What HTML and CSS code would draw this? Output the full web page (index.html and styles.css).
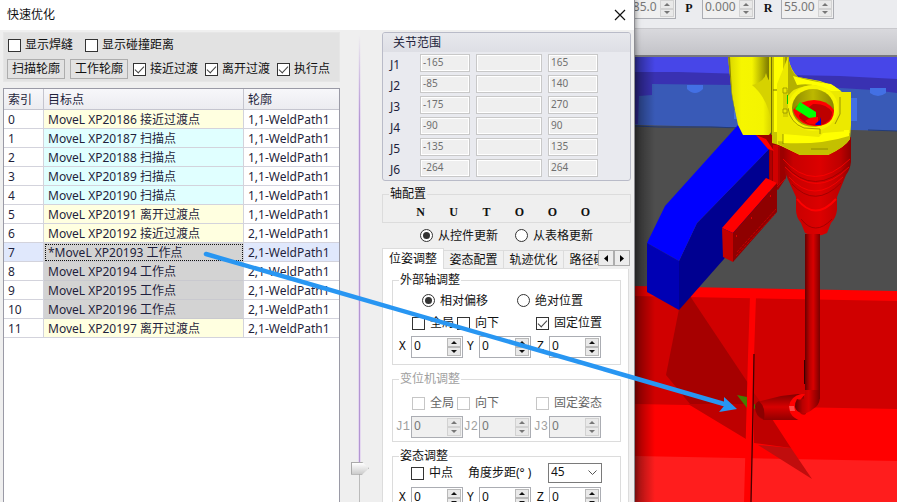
FILE: index.html
```html
<!DOCTYPE html>
<html lang="zh-CN">
<head>
<meta charset="utf-8">
<title>快速优化</title>
<link rel="stylesheet" href="styles.css">
</head>
<body>
<main class="dialog">
  <header class="titlebar">
    <h1>快速优化</h1>
    <button class="close" type="button" aria-label="关闭"><svg width="12" height="12" viewBox="0 0 12 12"><path d="M1 1l10 10M11 1L1 11" stroke="#111" stroke-width="1.2" fill="none"/></svg></button>
  </header>
  <div class="content">
    <section class="left">
      <div class="filters">
        <div class="filter-row">
          <label class="opt"><input type="checkbox">显示焊缝</label>
          <label class="opt wide"><input type="checkbox">显示碰撞距离</label>
        </div>
        <div class="filter-row second">
          <button type="button" class="btn">扫描轮廓</button>
          <button type="button" class="btn">工作轮廓</button>
          <label class="opt"><input type="checkbox" checked>接近过渡</label>
          <label class="opt"><input type="checkbox" checked>离开过渡</label>
          <label class="opt"><input type="checkbox" checked>执行点</label>
        </div>
      </div>
      <div class="grid-frame">
        <table class="points">
          <colgroup><col class="c-index"><col class="c-target"><col></colgroup>
          <thead><tr><th>索引</th><th>目标点</th><th>轮廓</th></tr></thead>
          <tbody>
            <tr><td>0</td><td class="pass">MoveL XP20186 接近过渡点</td><td>1,1-WeldPath1</td></tr>
            <tr><td>1</td><td class="scan">MoveL XP20187 扫描点</td><td>1,1-WeldPath1</td></tr>
            <tr><td>2</td><td class="scan">MoveL XP20188 扫描点</td><td>1,1-WeldPath1</td></tr>
            <tr><td>3</td><td class="scan">MoveL XP20189 扫描点</td><td>1,1-WeldPath1</td></tr>
            <tr><td>4</td><td class="scan">MoveL XP20190 扫描点</td><td>1,1-WeldPath1</td></tr>
            <tr><td>5</td><td class="pass">MoveL XP20191 离开过渡点</td><td>1,1-WeldPath1</td></tr>
            <tr><td>6</td><td class="pass">MoveL XP20192 接近过渡点</td><td>2,1-WeldPath1</td></tr>
            <tr class="current"><td>7</td><td class="work">*MoveL XP20193 工作点</td><td>2,1-WeldPath1</td></tr>
            <tr><td>8</td><td class="work">MoveL XP20194 工作点</td><td>2,1-WeldPath1</td></tr>
            <tr><td>9</td><td class="work">MoveL XP20195 工作点</td><td>2,1-WeldPath1</td></tr>
            <tr><td>10</td><td class="work">MoveL XP20196 工作点</td><td>2,1-WeldPath1</td></tr>
            <tr><td>11</td><td class="pass">MoveL XP20197 离开过渡点</td><td>2,1-WeldPath1</td></tr>
          </tbody>
        </table>
      </div>
    </section>

    <div class="slider"><input type="range" min="0" max="100" value="94" aria-label="位置"></div>

    <section class="right">
      <section class="joints">
        <h2>关节范围</h2>
        <div class="joint-rows">
          <label for="j1">J1</label><input id="j1" value="-165" disabled><input aria-label="J1" disabled><input aria-label="J1" value="165" disabled>
          <label for="j2">J2</label><input id="j2" value="-85" disabled><input aria-label="J2" disabled><input aria-label="J2" value="140" disabled>
          <label for="j3">J3</label><input id="j3" value="-175" disabled><input aria-label="J3" disabled><input aria-label="J3" value="270" disabled>
          <label for="j4">J4</label><input id="j4" value="-90" disabled><input aria-label="J4" disabled><input aria-label="J4" value="90" disabled>
          <label for="j5">J5</label><input id="j5" value="-135" disabled><input aria-label="J5" disabled><input aria-label="J5" value="135" disabled>
          <label for="j6">J6</label><input id="j6" value="-264" disabled><input aria-label="J6" disabled><input aria-label="J6" value="264" disabled>
        </div>
      </section>

      <fieldset class="axis">
        <legend>轴配置</legend>
        <div class="axis-flags"><b>N</b><b>U</b><b>T</b><b>O</b><b>O</b><b>O</b></div>
      </fieldset>

      <div class="radios source">
        <label class="opt"><input type="radio" name="source" checked>从控件更新</label>
        <label class="opt"><input type="radio" name="source">从表格更新</label>
      </div>

      <div class="tabs">
        <div class="tablist" role="tablist">
          <button type="button" role="tab" class="tab active" aria-selected="true">位姿调整</button>
          <button type="button" role="tab" class="tab">姿态配置</button>
          <button type="button" role="tab" class="tab">轨迹优化</button>
          <button type="button" role="tab" class="tab">路径碰撞</button>
        </div>
        <button type="button" class="scroll" aria-label="向左"><svg width="4" height="7" viewBox="0 0 4 7"><path d="M4 0v7L0 3.500z"/></svg></button>
        <button type="button" class="scroll" aria-label="向右"><svg width="4" height="7" viewBox="0 0 4 7"><path d="M0 0v7l4-3.500z"/></svg></button>
      </div>

      <div class="page">
        <fieldset class="group external">
          <legend>外部轴调整</legend>
          <div class="radios">
            <label class="opt"><input type="radio" name="mode" checked>相对偏移</label>
            <label class="opt"><input type="radio" name="mode">绝对位置</label>
          </div>
          <div class="checks">
            <label class="opt"><input type="checkbox">全局</label>
            <label class="opt"><input type="checkbox">向下</label>
            <label class="opt"><input type="checkbox" checked>固定位置</label>
          </div>
          <div class="spins">
            <label for="ex">X</label><span class="spin"><input id="ex" value="0"><button type="button" aria-label="增加"></button><button type="button" aria-label="减少" class="down"></button></span>
            <label for="ey">Y</label><span class="spin"><input id="ey" value="0"><button type="button" aria-label="增加"></button><button type="button" aria-label="减少" class="down"></button></span>
            <label for="ez">Z</label><span class="spin"><input id="ez" value="0"><button type="button" aria-label="增加"></button><button type="button" aria-label="减少" class="down"></button></span>
          </div>
        </fieldset>

        <fieldset class="group positioner" disabled>
          <legend>变位机调整</legend>
          <div class="checks">
            <label class="opt"><input type="checkbox">全局</label>
            <label class="opt"><input type="checkbox">向下</label>
            <label class="opt"><input type="checkbox">固定姿态</label>
          </div>
          <div class="spins">
            <label for="p1">J1</label><span class="spin"><input id="p1" value="0"><button type="button" aria-label="增加"></button><button type="button" aria-label="减少" class="down"></button></span>
            <label for="p2">J2</label><span class="spin"><input id="p2" value="0"><button type="button" aria-label="增加"></button><button type="button" aria-label="减少" class="down"></button></span>
            <label for="p3">J3</label><span class="spin"><input id="p3" value="0"><button type="button" aria-label="增加"></button><button type="button" aria-label="减少" class="down"></button></span>
          </div>
        </fieldset>

        <fieldset class="group">
          <legend>姿态调整</legend>
          <div class="step-row">
            <label class="opt"><input type="checkbox">中点</label>
            <label for="step">角度步距(° )</label>
            <select id="step"><option>45</option></select>
          </div>
          <div class="spins">
            <label for="ax">X</label><span class="spin"><input id="ax" value="0"><button type="button" aria-label="增加"></button><button type="button" aria-label="减少" class="down"></button></span>
            <label for="ay">Y</label><span class="spin"><input id="ay" value="0"><button type="button" aria-label="增加"></button><button type="button" aria-label="减少" class="down"></button></span>
            <label for="az">Z</label><span class="spin"><input id="az" value="0"><button type="button" aria-label="增加"></button><button type="button" aria-label="减少" class="down"></button></span>
          </div>
        </fieldset>
      </div>
    </section>
  </div>
</main>

<section class="viewport">
  <div class="pose">
    <span class="spin clipped"><input aria-label="Y" value="185.0" disabled><button type="button" aria-label="增加" disabled></button><button type="button" aria-label="减少" class="down" disabled></button></span>
    <label for="pp">P</label>
    <span class="spin"><input id="pp" value="0.000" disabled><button type="button" aria-label="增加" disabled></button><button type="button" aria-label="减少" class="down" disabled></button></span>
    <label for="pr">R</label>
    <span class="spin"><input id="pr" value="55.00" disabled><button type="button" aria-label="增加" disabled></button><button type="button" aria-label="减少" class="down" disabled></button></span>
  </div>
  <div class="strip"></div>
  <svg class="scene" viewBox="635 57 262 445" preserveAspectRatio="xMinYMin slice" role="img" aria-label="3D">
    <defs>
      <linearGradient id="rod"><stop offset="0" stop-color="#650000"/><stop offset=".3" stop-color="#b80000"/><stop offset=".55" stop-color="#d80000"/><stop offset="1" stop-color="#780000"/></linearGradient>
      <linearGradient id="cone"><stop offset="0" stop-color="#9a0000"/><stop offset=".15" stop-color="#c80000"/><stop offset=".55" stop-color="#dc0000"/><stop offset=".85" stop-color="#bd0000"/><stop offset="1" stop-color="#8c0000"/></linearGradient>
      <linearGradient id="edge"><stop offset="0" stop-color="#000" stop-opacity=".4"/><stop offset="1" stop-color="#000" stop-opacity="0"/></linearGradient>
      <linearGradient id="shell"><stop offset="0" stop-color="#d8d400"/><stop offset=".3" stop-color="#f6f600"/><stop offset=".8" stop-color="#f4f400"/><stop offset="1" stop-color="#d4d000"/></linearGradient>
      <linearGradient id="fold"><stop offset="0" stop-color="#8a8600" stop-opacity="0"/><stop offset="1" stop-color="#7c7900"/></linearGradient>
      <linearGradient id="nozzle" x2="0" y2="1"><stop offset="0" stop-color="#800000"/><stop offset=".5" stop-color="#d80000"/><stop offset="1" stop-color="#900000"/></linearGradient>
      <linearGradient id="bore"><stop offset="0" stop-color="#8e8a00"/><stop offset=".5" stop-color="#bcb800"/><stop offset="1" stop-color="#8a8600"/></linearGradient>
    </defs>
    <path fill="#4e4e4e" d="M635 57h262v445H635z"/>
    <path fill="#395ab7" d="M635 84h262v47L635 125z"/>
    <path fill="#3931b2" d="M635 70h262v23l-24-3-33-2-105-3-83-1v11l-13 1-1 28h-3z"/>
    <path fill="#4746e8" d="M635 57h262v22l-57-3-100-2-62-2h-43z"/>
    <path fill="#4370e4" d="M687 85h16v4q-4 4-8 4t-8-4zM870 88h16v5q-4 3-8 3t-8-3zM734 110h4v9h-4zM850 98h7v23h-7z"/>
    <path stroke="#223b78" d="M635 126l24 1h52l30 1M868 130l29 1" fill="none"/>

    <path fill="#d00000" d="M635 295l262 5v111l-262-5z"/>
    <path fill="red" d="M635 286l262 5v10l-262-5zM635 404l262 5v53l-262-5z"/>
    <path fill="#ff1d1d" d="M635 456l262 5v41H635z"/>
    <path fill="#a60000" d="M679 309l11-13 58 87v22l-58-1-24-29z"/>
    <path fill="#be0000" d="M688 404h60l-2 35zM754 393l9 12 28 43-37-5z"/>
    <path fill="#c00d0d" d="M758 445l33 3 21 31z"/>
    <path fill="red" d="M750 296h6l-2 60-3 146h-7l4-146z"/>
    <path stroke="#450000" stroke-width="1.300" d="M754 354l-1 56-2 92" fill="none"/>
    <path fill="#477c00" d="M737 395l10 2v11zM754 404l2 1v3l-2 1z"/>
    <path fill="url(#edge)" d="M635 57h20v445h-20z"/>

    <path fill="#000090" d="M769 149v50l-45 60-45 51v-49l18-38z"/>
    <path fill="#00f" d="M738 125l18 4 13 20-72 74-18 38-32-18 18-37z"/>
    <path fill="#0000b4" d="M647 243l32 18v49l-32-18z"/>
    <path fill="#9c0000" d="M755 134h30l1 44-8 12-9-6v-36z"/>
    <path stroke="#e80000" fill="none" stroke-width=".6" d="M771 148v38M774 150l5-4v38M776 188l9-9"/>
    <path fill="#d00000" d="M773 145h5v40h-5z"/>
    <path fill="red" d="M722 228l44-50 11 5-44 50zM756 135l10 4 8 12-6-2z"/>
    <path fill="#c40000" d="M722 228l11 5v29l-10-5z"/>
    <path fill="#8f0000" d="M733 233l44-50v29l-44 50z"/>
    <path stroke="#d80000" fill="none" stroke-width=".7" stroke-dasharray="3 1" d="M737 252l39-43M736 256l39-42"/>
    <path fill="#e00000" d="M736 235h1v2h-1zM751 217h1v2h-1zM770 195h1v2h-1z"/>

    <path fill="url(#cone)" d="M783 145l68-8v25q-1 8-5 13l-9 22v13q-1 8-6 13l-4 10q-11 6-22 0l-4-10q-5-6-5-13v-13l-10-22q-3-6-3-13z"/>
    <path fill="none" stroke="#f00" stroke-width=".8" d="M783 159q31 35 67 0M785 167q31 33 64 0M789 177q25 28 54 0"/>
    <path fill="none" stroke="#960000" stroke-width=".8" d="M784 164q30 35 66 0M792 184q23 25 49-1M798 206q0 0 0 0M801 219q14 18 31 0"/>
    <path fill="none" stroke="#f00" stroke-width="2" d="M797 199q18 23 39 0"/>
    <path fill="url(#rod)" d="M805 234h15v165h-15z"/>
    <path stroke="#360000" d="M804.500 360v24" fill="none"/>

    <path fill="url(#nozzle)" d="M755 406q1-4 6-5l20-5 17-2 6 2 2 18-8 6h-34q-9-3-9-14z"/>
    <path fill="#8a0000" d="M755 406q1-4 4-5 7 6 5 18-9-2-9-13z"/>
    <path fill="red" d="M802 394h3l-4 5q-6 9 0 15 4 2 7-1l-3 6q-5 3-10-1-6-4-6-11 1-11 13-13z"/>
    <path fill="#ff4a4a" d="M789 406h5l1 5h-5z"/>
    <path fill="url(#rod)" d="M805 390h15v8q-1 8-7 11-5 5-11 4-6-1-7-6 0-5 2-8 8 2 8-4z"/>

    <path fill="url(#shell)" d="M728 57h44v74l-3 4h-26l-5-10-6-29z"/>
    <path fill="#8f8b00" d="M728 57h2l2 36 5 32-5-29z"/>
    <path fill="url(#fold)" d="M752 57h17v26q-9 0-17 2z"/>
    <path fill="#d6d200" d="M752 85q13-4 14-12 2 8 6 10v44q-3-28-20-42z"/>
    <path fill="#c9c500" d="M772 57h17v91l-17-5z"/>
    <path fill="#ff0" d="M774 57h9v75h-9z"/>
    <path stroke="#777300" fill="none" d="M771.500 57v78M786 57v78M773 90h12"/>
    <path fill="#ece900" d="M788 57q3 14 10 20l22 4 14 5 8 6h9v33l-1 14q-5 8-22 16h-28l-23-11v-60z"/>
    <path fill="#b4b000" d="M788 57q3 16 10 20l19 4 14 4 7 6q-18-7-32-5-13 2-18 10z"/>
    <path fill="#ff0" d="M793 76q20 6 38 8l10 7h-10q-18-9-34-6z"/>
    <path fill="#c4c000" d="M778 141q35 4 72-8v6q-5 8-22 16h-28l-22-11z"/>
    <path fill="#ff0" d="M783 134l36 3 4-4 26-2v5q-28 9-66 7z"/>
    <ellipse cx="813" cy="108" rx="25" ry="23" fill="#f8f500"/>
    <ellipse cx="813" cy="108" rx="21" ry="19" fill="url(#bore)"/>
    <path fill="red" d="M793 110q8-10 21-10t20 10q0 10-8 14-12 5-23-1-8-5-10-13z"/>
    <path fill="#bd0000" d="M813 104q13-1 19 8 1 7-8 12-10 3-18-1-8-5-7-8z"/>
    <path fill="red" d="M805 121l7-4h6v7q-8 2-13-3z"/>
    <path fill="#0f0" d="M800 102l16 10v5l-7 1-14-9z"/>
    <path fill="#0000d0" d="M815 124l5-4 1-3v8h-5z"/>
    <path fill="none" stroke="#858100" stroke-width=".8" d="M788 108q2 15 16 20l16 1v5M783 134v10M811 149h17M840 97v17l-5 10"/>
    <path fill="#d5d100" d="M783 90h5v27h-5z"/>
    <path fill="#ff0" d="M844 130h5v6h-5z"/>
    <path fill="#ece800" stroke="#8b8700" stroke-width=".7" d="M783 88h4v5h-4zM783 109h4v4h-4z"/>
    <path stroke="#00c800" d="M787.500 95v9" fill="none"/>
  </svg>
</section>

<svg class="pointer" viewBox="0 0 897 502" preserveAspectRatio="none" aria-hidden="true">
  <path d="M206 254L724 404" stroke="#2896f2" stroke-width="4.500" stroke-linecap="round"/>
  <path d="M724 397l13 12-18 3 5-6z" fill="#2896f2"/>
</svg>
</body>
</html>
```
FILE: styles.css
```css
* { box-sizing: border-box; }

body {
  margin: 0;
  height: 100vh;
  overflow: hidden;
  display: grid;
  grid-template-columns: minmax(0, 635fr) minmax(0, 262fr);
  position: relative;
  background: #efefef;
  color: #111;
  font: 12px/14px "Noto Sans", "Noto Sans CJK SC", sans-serif;
}

button, input, select { font: inherit; color: inherit; margin: 0; padding: 0; border-radius: 0; }
input { min-width: 0; }

/* dialog */
.dialog {
  display: flex;
  flex-direction: column;
  min-height: 0;
  border-right: 1px solid #8d8d92;
  z-index: 1;
  box-shadow: 0 0 6px rgba(0, 0, 0, .5);
  background: #efefef;
}
.titlebar {
  flex: none;
  height: 30px;
  padding: 0 8px 0 7px;
  display: flex;
  align-items: center;
  justify-content: space-between;
  background: #fff;
}
.titlebar h1 { margin: 0; font-size: 12px; font-weight: 400; }
.close { border: 0; background: none; width: 12px; height: 12px; line-height: 0; }
.content { flex: 1; display: flex; min-height: 0; }

.left { flex: 1; min-width: 0; padding: 2px 0 0 3px; display: flex; flex-direction: column; }
.filters {
  height: 50px;
  padding: 3px 3px 0;
  background: #e2e2e2;
  border: 1px solid #e6e6e6;
}
.filter-row { display: flex; align-items: center; gap: 12px; height: 18px; padding-left: 1px; }
.filter-row.second { gap: 5px; height: 20px; margin-top: 5px; padding-left: 0; }
.filter-row .opt { gap: 4px; }
.filter-row.second .opt + .opt { margin-left: 2px; }
.btn { width: 58px; height: 20px; border: 1px solid #adadad; background: #e2e2e2; white-space: nowrap; }

.opt { display: flex; align-items: center; gap: 5px; white-space: nowrap; }
.opt input {
  appearance: none;
  flex: none;
  width: 13px;
  height: 13px;
  border: 1px solid #333;
  background: #fff;
  display: grid;
  place-content: center;
}
.opt input[type="checkbox"]:checked::before {
  content: "";
  width: 8px;
  height: 4px;
  margin-bottom: 2px;
  border: solid #444;
  border-width: 0 0 1px 1px;
  transform: rotate(-47deg);
}
.opt input[type="radio"] { border-radius: 50%; }
.opt input[type="radio"]:checked::before {
  content: "";
  width: 7px;
  height: 7px;
  border-radius: 50%;
  background: #333;
}

.grid-frame { flex: 1; min-height: 0; margin-top: 6px; background: #fff; border: 1px solid #9a9aa6; border-bottom: 0; overflow: hidden; }
.points { width: 100%; table-layout: fixed; border-collapse: separate; border-spacing: 0; color: #1f1f3c; }
.c-index { width: 40px; }
.c-target { width: 200px; }
.points th, .points td {
  height: 19px;
  padding: 2px 4px 0;
  border-right: 1px solid #d3d3dc;
  border-bottom: 1px solid #d3d3dc;
  text-align: left;
  font-weight: 400;
  white-space: nowrap;
}
.points th:last-child, .points td:last-child { border-right: 0; }
.points th { height: 21px; background: linear-gradient(#f7f7fa, #ececf0); border-color: #c5c5cf; }
.points .pass { background: #ffffe0; }
.points .scan { background: #e0ffff; }
.points .work { background: #d3d3d3; border-bottom-color: #c9c9cf; }
.points .current td { background: #e0e8fc; }
.points .current .work { background: #d3d3d3; outline: 1px dotted #111; outline-offset: -2px; }

/* vertical slider */
.slider { flex: none; width: 42px; padding: 5px 0 0 11px; }
.slider input {
  appearance: none;
  writing-mode: vertical-lr;
  display: block;
  width: 18px;
  height: 100%;
  background:
    linear-gradient(rgba(178, 150, 210, 0), #b296d2 20%) 8px 0 / 1px 93% no-repeat,
    linear-gradient(rgba(226, 205, 245, 0), #e5d8f0 20%) 7px 0 / 3px 93% no-repeat,
    linear-gradient(#bbb, #bbb) 8px 100% / 1px 8% no-repeat;
}
.slider input::-webkit-slider-thumb {
  appearance: none;
  width: 18px;
  height: 13px;
  background: linear-gradient(#fff, #ccc);
  border: 1px solid #aaa;
  clip-path: polygon(0 0, 11px 0, 18px 50%, 11px 100%, 0 100%);
}

/* right column */
.right { flex: none; width: 252px; padding: 2px 3px 0 0; }
.joints { border: 1px solid #b9bbc8; border-radius: 3px; background: #e9eaef; color: #1f1f3c; overflow: hidden; padding-bottom: 3px; }
.joints h2 { margin: 0 0 2px; padding: 0 10px; height: 19px; line-height: 20px; font-size: 12px; font-weight: 400; background: linear-gradient(#e7e8ed, #dedfe5); }
.joint-rows { display: grid; grid-template-columns: 24px 50px 66px 50px; gap: 3px 6px; padding-left: 7px; }
.joint-rows label { line-height: 21px; height: 18px; }
.joint-rows input {
  height: 18px;
  padding: 0 2px 2px;
  border: 1px solid #c8c8c8;
  box-shadow: inset 0 0 0 1px #fff;
  background: #efefef;
  color: #6f6f6f;
  font-size: 10px;
}

fieldset { margin: 0; padding: 0; border: 1px solid #dcdcdc; min-width: 0; }
legend { margin-left: 6px; padding: 0 1px; height: 14px; }
.axis { margin-top: 6px; }
.axis-flags { display: flex; padding-left: 21px; height: 21px; align-items: center; font: 700 12px/14px "Liberation Serif", serif; }
.axis-flags b { width: 33px; text-align: center; }

.radios { display: grid; grid-template-columns: 95px 1fr; align-items: center; height: 27px; padding-left: 29px; }
.radios.source { height: 25px; padding-left: 38px; }

.tabs { display: flex; height: 21px; position: relative; z-index: 1; padding-right: 1px; }
.tablist { flex: 1; min-width: 0; display: flex; align-items: flex-end; overflow: hidden; }
.tab { flex: none; width: 60px; height: 19px; border: 1px solid #dcdcdc; border-left: 0; background: #f0f0f0; white-space: nowrap; }
.tab.active { width: 62px; height: 21px; border-left: 1px solid #dcdcdc; border-bottom: 0; background: #fff; }
.scroll { width: 16px; height: 16px; margin-top: 2px; border: 1px solid #adadad; background: #ececec; display: grid; place-content: center; }

.page { background: #fff; border: solid #dcdcdc; border-width: 0 1px; margin-right: 2px; padding: 4px 7px 8px 9px; }
.group + .group { margin-top: 7px; }
.external { padding-bottom: 6px; }
.positioner { padding: 0 0 3px; color: #a0a0a0; }
.positioner .checks { margin-top: 8px; color: #666; }
.positioner .opt input { border-color: #c6c6c6; }
.checks { display: grid; grid-template-columns: 45px 79px 1fr; height: 18px; align-items: center; padding-left: 19px; }
.spins { display: grid; grid-template-columns: 18px 52px 16px 52px 18px 52px; margin-top: 4px; align-items: center; }
.spins label { text-align: right; padding-right: 5px; font: 12px/14px "Liberation Mono", monospace; }
.positioner .spins label { padding-right: 1px; }
.step-row { display: grid; grid-template-columns: 57px 80px 54px; align-items: center; height: 20px; padding-left: 18px; white-space: nowrap; }
.step-row select {
  appearance: none;
  height: 20px;
  border: 1px solid #7a7a7a;
  padding: 0 2px 2px;
  background: #fff url("data:image/svg+xml,%3Csvg xmlns='http://www.w3.org/2000/svg' width='9' height='6'%3E%3Cpath d='M.5.500l4 4 4-4' fill='none' stroke='%23555'/%3E%3C/svg%3E") no-repeat right 4px center;
}

.spin {
  display: grid;
  grid-template-columns: 1fr 14px;
  grid-template-rows: 1fr 1fr;
  width: 52px;
  height: 22px;
  padding: 1px;
  border: 1px solid #abadb3;
  background: #fff;
}
.spin input { grid-row: 1 / 3; width: 100%; border: 0; padding: 0 1px 3px; background: none; }
.spin button { grid-column: 2; border: 1px solid #b9b9b9; background: #e9e9e9; display: grid; place-content: center; }
.spin button::before { content: ""; border: solid transparent; border-width: 0 3px 3px; border-bottom-color: #111; }
.spin .down::before { border-width: 3px 3px 0; border-top-color: #111; }
.spin:has(:disabled) { background: #f0f0f0; color: #777; }
.spin button:disabled { border-color: #d2d2d2; }
.spin button:disabled::before { border-bottom-color: #777; }
.spin .down:disabled::before { border-top-color: #777; }

/* 3D view */
.viewport { display: flex; flex-direction: column; min-height: 0; overflow: hidden; background: #4e4e4e; }
.pose { flex: none; height: 29px; display: flex; background: #ebecef; border-bottom: 1px solid #c8c8cc; overflow: hidden; }
.pose .spin { flex: none; width: 53px; height: 19px; border-top: 0; padding-top: 0; }
.pose .clipped { margin-left: -12px; }
.pose label { flex: none; width: 26px; text-align: center; font: 700 12px/17px "Liberation Serif", serif; }
.strip { flex: none; height: 28px; background: linear-gradient(#d9d9dd, #c3c3c8); border-bottom: 2px solid #77777c; }
.scene { display: block; flex: 1; min-height: 0; width: 100%; }

.pointer { position: absolute; inset: 0; width: 100%; height: 100%; z-index: 2; pointer-events: none; }
```
